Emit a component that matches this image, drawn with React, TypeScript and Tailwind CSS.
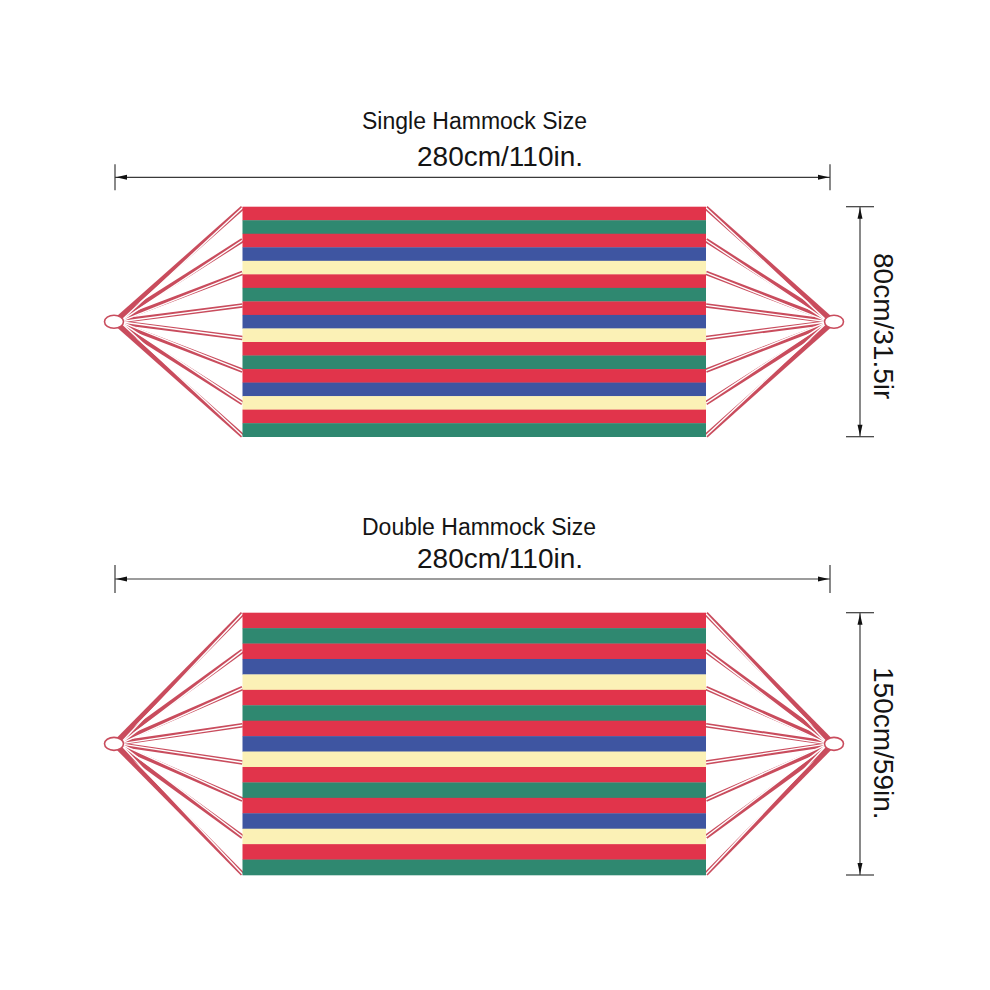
import React from "react";

const STRIPE_COLORS: Record<string, string> = {
	r: "#e1344b",
	g: "#2f8870",
	b: "#3e55a1",
	y: "#fbf1b6",
};

const PATTERN = "rgrbyrgrbyrgrbyrg".split("");

interface HammockProps {
	height: number;
	lineY: number;
	tickHalf: number;
	bodyTop: number;
	bodyH: number;
}

const ROPE = "#c94c5d";
const LINE = "#3a3a3a";

const HammockDrawing: React.FC<HammockProps> = ({ height, lineY, tickHalf, bodyTop, bodyH }) => {
	const left = 242.5;
	const right = 706;
	const ringY = bodyTop + bodyH / 2;
	const stripeH = bodyH / PATTERN.length;
	const anchors = Array.from({ length: 8 }, (_, i) => bodyTop + 1 + (i * (bodyH - 2)) / 7);
	const bottom = bodyTop + bodyH;

	return (
		<svg width={869} height={height} viewBox={`0 0 869 ${height}`} style={{ overflow: "visible" }}>
			{/* width dimension */}
			<line x1={115} y1={lineY} x2={830} y2={lineY} stroke={LINE} strokeWidth={1.2} />
			<line x1={115} y1={lineY - tickHalf} x2={115} y2={lineY + tickHalf} stroke={LINE} strokeWidth={1.2} />
			<line x1={830} y1={lineY - tickHalf} x2={830} y2={lineY + tickHalf} stroke={LINE} strokeWidth={1.2} />
			<polygon points={`116,${lineY} 127,${lineY - 2.5} 127,${lineY + 2.5}`} fill="#111" />
			<polygon points={`829,${lineY} 818,${lineY - 2.5} 818,${lineY + 2.5}`} fill="#111" />

			{/* ropes */}
			{anchors.map((y, i) => (
				<g key={i}>
					<line x1={114} y1={ringY} x2={left} y2={y} stroke={ROPE} strokeWidth={4.5} />
					<line x1={834} y1={ringY} x2={right} y2={y} stroke={ROPE} strokeWidth={4.5} />
				</g>
			))}
			{anchors.map((y, i) => (
				<g key={"w" + i}>
					<line x1={120} y1={ringY} x2={left} y2={y} stroke="#fff" strokeWidth={1.4} />
					<line x1={828} y1={ringY} x2={right} y2={y} stroke="#fff" strokeWidth={1.4} />
				</g>
			))}
			<ellipse cx={114} cy={ringY} rx={9.5} ry={6.5} fill="#fff" stroke={ROPE} strokeWidth={1.6} />
			<ellipse cx={834} cy={ringY} rx={9.5} ry={6.5} fill="#fff" stroke={ROPE} strokeWidth={1.6} />

			{/* fabric */}
			{PATTERN.map((c, i) => (
				<rect
					key={i}
					x={left}
					y={bodyTop + i * stripeH}
					width={right - left}
					height={stripeH + 0.3}
					fill={STRIPE_COLORS[c]}
				/>
			))}

			{/* height dimension */}
			<line x1={860} y1={bodyTop} x2={860} y2={bottom} stroke={LINE} strokeWidth={1.2} />
			<line x1={846} y1={bodyTop} x2={874} y2={bodyTop} stroke={LINE} strokeWidth={1.2} />
			<line x1={846} y1={bottom} x2={874} y2={bottom} stroke={LINE} strokeWidth={1.2} />
			<polygon points={`860,${bodyTop + 1} 857.5,${bodyTop + 12} 862.5,${bodyTop + 12}`} fill="#111" />
			<polygon points={`860,${bottom - 1} 857.5,${bottom - 12} 862.5,${bottom - 12}`} fill="#111" />
		</svg>
	);
};

export default function App() {
	return (
		<div className="w-[990px] h-[990px] bg-white flex flex-col font-['Liberation_Sans',Arial,sans-serif] text-[#141414]">
			<div className="pt-[110px] flex flex-col">
				<p className="pl-[362px] text-[23px] leading-none">Single Hammock Size</p>
				<p className="pl-[417px] mt-[10px] text-[28px] leading-none">280cm/110in.</p>
				<div className="flex mt-[-11px]">
					<HammockDrawing height={290} lineY={17.3} tickHalf={13} bodyTop={46.7} bodyH={230} />
					<div className="mt-[93px] text-[28px] leading-none [writing-mode:vertical-rl]">80cm/31.5ir</div>
				</div>
			</div>

			<div className="mt-[66px] flex flex-col">
				<p className="pl-[362px] text-[23px] leading-none">Double Hammock Size</p>
				<p className="pl-[417px] mt-[6px] text-[28px] leading-none">280cm/110in.</p>
				<div className="flex mt-[-11px]">
					<HammockDrawing height={328} lineY={17} tickHalf={14} bodyTop={50.7} bodyH={262.3} />
					<div className="mt-[105px] text-[28px] leading-none [writing-mode:vertical-rl]">150cm/59in.</div>
				</div>
			</div>
		</div>
	);
}
